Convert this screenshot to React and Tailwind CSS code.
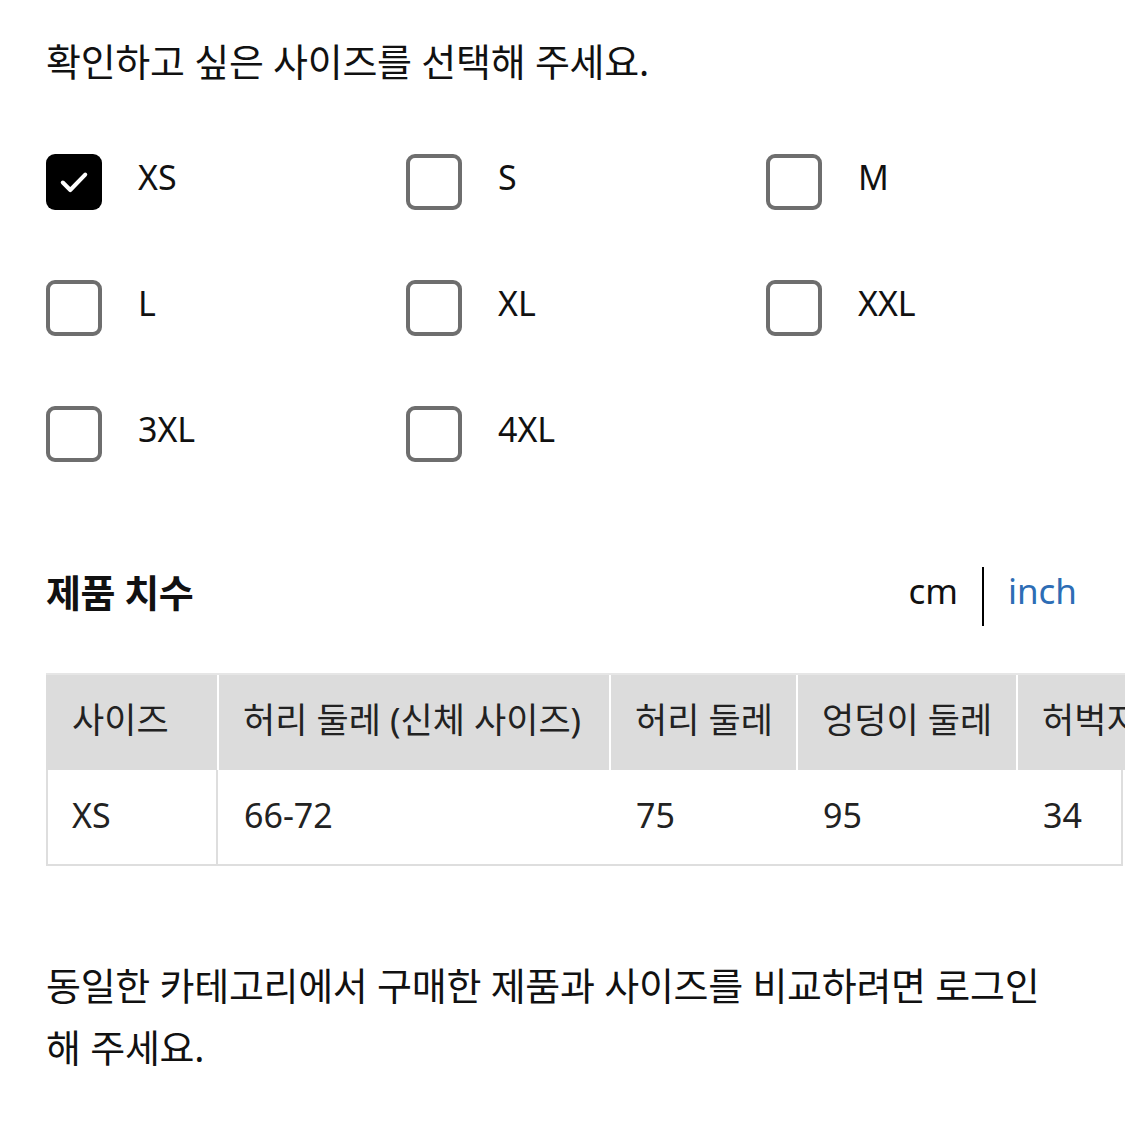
import React from "react";

const font = { fontFamily: '"Noto Sans", "Noto Sans CJK KR", sans-serif' };

function Box({ checked }) {
  if (checked) {
    return (
      <div className="w-[56px] h-[56px] rounded-[9px] bg-black flex items-center justify-center shrink-0">
        <svg width="32" height="32" viewBox="0 0 30 30" fill="none">
          <path d="M4.5 15.5 L11.5 22.5 L25.5 8" stroke="white" strokeWidth="3.8" strokeLinecap="round" strokeLinejoin="round" />
        </svg>
      </div>
    );
  }
  return <div className="w-[56px] h-[56px] rounded-[9px] border-[4px] border-[#6e6e6e] bg-white shrink-0" />;
}

const sizes = [
  ["XS", true],
  ["S", false],
  ["M", false],
  ["L", false],
  ["XL", false],
  ["XXL", false],
  ["3XL", false],
  ["4XL", false],
];

export default function App() {
  return (
    <div className="w-[1125px] h-[1125px] bg-white text-[#111] overflow-hidden" style={font}>
      <div className="pl-[46px] pr-[48px] pt-[35px]">
        <p className="text-[38px] leading-[52px] tracking-[-0.3px]">확인하고 싶은 사이즈를 선택해 주세요.</p>
        <div className="grid grid-cols-[360px_360px_1fr] gap-y-[70px] mt-[67px]">
          {sizes.map(([s, c]) => (
            <div key={s} className="flex items-center gap-[36px] h-[56px]">
              <Box checked={c} />
              <span className="text-[34px] leading-none -mt-[11px]">{s}</span>
            </div>
          ))}
        </div>
        <div className="flex items-center justify-between mt-[104px] h-[60px]">
          <h2 className="text-[38px] font-bold leading-none tracking-[-0.5px] -mt-[8px]">제품 치수</h2>
          <div className="flex items-center">
            <span className="text-[35px] leading-none -mt-[12px]">cm</span>
            <span className="w-[2px] h-[59px] bg-black mx-[24px]" />
            <span className="text-[35px] leading-none text-[#2d6db5] -mt-[12px]">inch</span>
          </div>
        </div>
      </div>
      <div className="ml-[46px] mt-[47px] overflow-hidden">
        <div className="flex w-[1200px] h-[97px] bg-[#dcdcdc] border-t-[2px] border-[#e6e6e6] text-[35px] text-[#222]">
          <div className="w-[173px] pl-[26px] pb-[4px] flex items-center border-r-[2px] border-white">사이즈</div>
          <div className="w-[392px] pl-[24px] pb-[4px] flex items-center border-r-[2px] border-white">허리 둘레 (신체 사이즈)</div>
          <div className="w-[187px] pl-[24px] pb-[4px] flex items-center border-r-[2px] border-white">허리 둘레</div>
          <div className="w-[220px] pl-[24px] pb-[4px] flex items-center border-r-[2px] border-white">엉덩이 둘레</div>
          <div className="flex-1 pl-[24px] pb-[4px] flex items-center whitespace-nowrap">허벅지 둘레</div>
        </div>
        <div className="flex w-[1077px] h-[96px] border-l-[2px] border-r-[2px] border-b-[2px] border-[#dedede] text-[34px] text-[#222]">
          <div className="w-[170px] pl-[24px] pb-[4px] flex items-center border-r-[2px] border-[#dedede]">XS</div>
          <div className="w-[394px] pl-[26px] pb-[4px] flex items-center">66-72</div>
          <div className="w-[187px] pl-[24px] pb-[4px] flex items-center">75</div>
          <div className="w-[220px] pl-[24px] pb-[4px] flex items-center">95</div>
          <div className="flex-1 pl-[24px] pb-[4px] flex items-center">34</div>
        </div>
      </div>
      <div className="pl-[46px] pr-[48px] mt-[88px]">
        <p className="text-[38px] leading-[62px] tracking-[-0.3px]">동일한 카테고리에서 구매한 제품과 사이즈를 비교하려면 로그인 해 주세요.</p>
      </div>
    </div>
  );
}
